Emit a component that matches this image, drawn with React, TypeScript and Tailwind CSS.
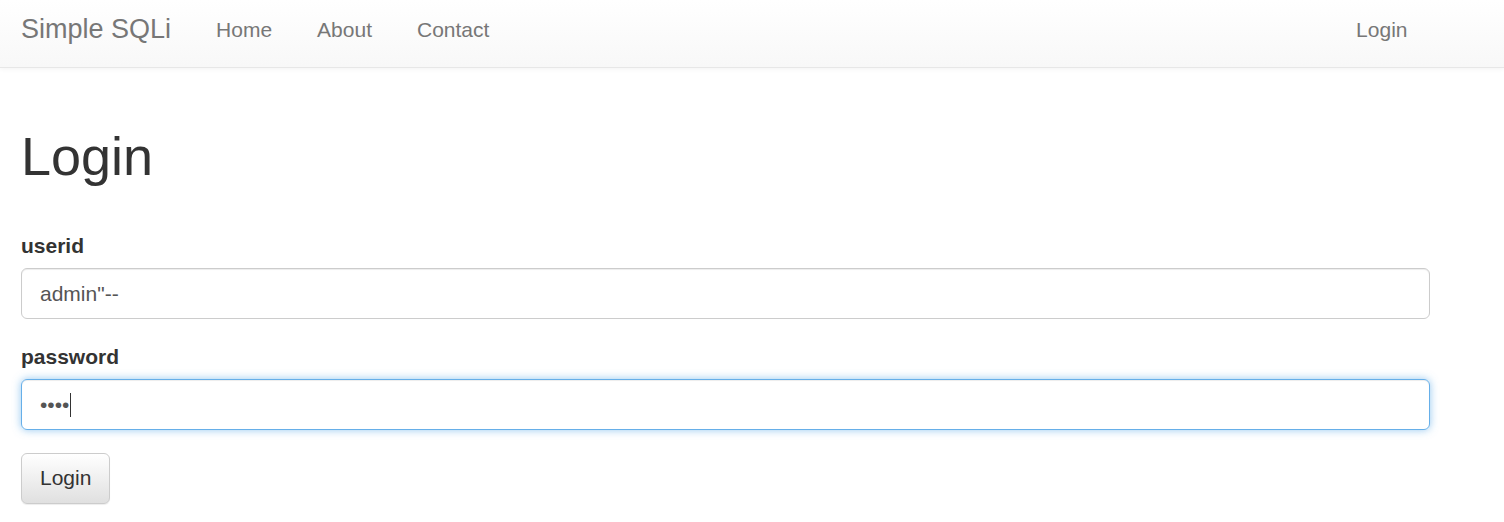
const navLinks = ["Home", "About", "Contact"]

const App = () => {
  return (
    <div className="min-h-[522px] bg-white text-[#333] font-['Liberation_Sans',Arial,sans-serif] text-[21px]">
      <nav className="h-[68px] border-b border-[#e7e7e7] bg-gradient-to-b from-white to-[#f8f8f8] shadow-[0_1px_5px_rgba(0,0,0,0.05)]">
        <div className="ml-[21px] w-[1409px] flex">
          <a className="pt-[14px] pr-[22.5px] text-[27px] leading-[30px] text-[#777]">Simple SQLi</a>
          {navLinks.map(link => (
            <a key={link} className="pt-[15px] px-[22.5px] leading-[30px] text-[#777]">{link}</a>
          ))}
          <a className="ml-auto pt-[15px] px-[22.5px] leading-[30px] text-[#777]">Login</a>
        </div>
      </nav>

      <div className="ml-[21px] w-[1409px]">
        <h1 className="mt-[58.5px] text-[54px] leading-[59.4px] font-normal text-[#333]">Login</h1>

        <form className="mt-[45px]" onSubmit={e => e.preventDefault()}>
          <div className="mb-[22.5px]">
            <label className="block mb-[7.5px] font-bold leading-[30px]">userid</label>
            <input
              type="text"
              defaultValue={'admin"--'}
              className="block w-full h-[51px] px-[18px] py-[9px] border border-[#ccc] rounded-[6px] text-[#555] shadow-[inset_0_1px_1px_rgba(0,0,0,0.075)] outline-none"
            />
          </div>
          <div className="mb-[22.5px]">
            <label className="block mb-[7.5px] font-bold leading-[30px]">password</label>
            <div className="flex items-center w-full h-[51px] px-[18px] border border-[#66afe9] rounded-[6px] text-[#555] shadow-[inset_0_1px_1px_rgba(0,0,0,0.075),0_0_9px_rgba(102,175,233,0.7)]">
              <span className="leading-[30px]">••••</span>
              <span className="ml-px w-px h-[24px] bg-[#333]"></span>
            </div>
          </div>
          <button
            type="submit"
            className="h-[51px] px-[18px] border border-[#ccc] rounded-[6px] bg-gradient-to-b from-white to-[#e0e0e0] text-[#333] leading-[30px] shadow-[inset_0_1px_0_rgba(255,255,255,0.15),0_1px_1px_rgba(0,0,0,0.075)]"
          >
            Login
          </button>
        </form>
      </div>
    </div>
  )
}

export default App
